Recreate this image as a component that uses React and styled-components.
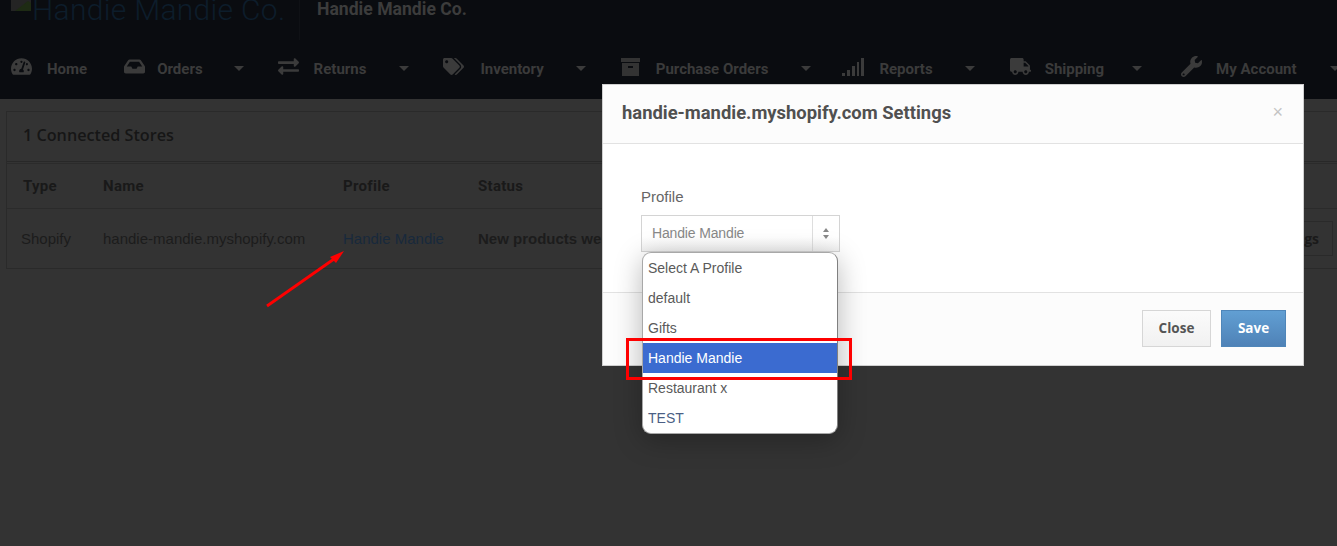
import React from 'react';
import styled, { createGlobalStyle } from 'styled-components';
import {
  FaTachometerAlt, FaInbox, FaExchangeAlt, FaTags, FaTruck, FaWrench,
} from 'react-icons/fa';

const GlobalStyle = createGlobalStyle`
  html, body {
    margin: 0;
    height: 100%;
    background: #333;
    overflow: hidden;
  }
  * { box-sizing: border-box; }
`;

const Page = styled.div`
  position: relative;
  width: 1337px;
  height: 546px;
  overflow: hidden;
  font-family: "Liberation Sans", Arial, sans-serif;
  font-size: 15px;
  color: #1c1c1c;
`;

const TopBar = styled.header`
  height: 99px;
  background: #0a0c10;
`;

const Brand = styled.div`
  height: 40px;
  display: flex;
  align-items: flex-start;
  padding-left: 11px;
  overflow: hidden;
`;

const LogoAlt = styled.div`
  width: 289px;
  height: 40px;
  display: flex;
  border-right: 1px solid #0f1115;
  font-family: Roboto, sans-serif;
  font-weight: 300;
  font-size: 30px;
  line-height: 20px;
  letter-spacing: 0.3px;
  color: #0d1d2b;
  svg { flex: none; margin-right: 1px; }
`;

const StoreName = styled.div`
  margin-left: 17px;
  font-family: Roboto, sans-serif;
  font-weight: 700;
  font-size: 17.6px;
  line-height: 18px;
  color: #3c3c3c;
`;

const Nav = styled.nav`
  display: flex;
  align-items: center;
  height: 59px;
  padding: 0 0 2px 11px;
  font-family: Roboto, sans-serif;
  font-weight: 700;
  font-size: 15px;
  color: #3b3b3b;
`;

const NavItem = styled.a`
  flex: none;
  display: flex;
  align-items: center;
  white-space: nowrap;
  margin-right: ${(p) => p.$after}px;
`;

const NavIcon = styled.span`
  display: flex;
  width: ${(p) => p.$width}px;
  font-size: 21px;
  position: relative;
  top: -2px;
`;

const Caret = styled.span`
  flex: none;
  margin-left: ${(p) => p.$gap}px;
  width: 0;
  height: 0;
  border-left: 5px solid transparent;
  border-right: 5px solid transparent;
  border-top: 5px solid #3b3b3b;
`;

const Content = styled.main`
  padding: 12px 0 0 6px;
`;

const StoresPanel = styled.section`
  border: 1px solid #2a2a2a;
  width: 1340px;
  height: 158px;
`;

const PanelHeading = styled.h2`
  margin: 0 0 1px;
  height: 50px;
  padding: 0 16px 3px;
  display: flex;
  align-items: center;
  border-bottom: 1px solid #282828;
  font-family: "Open Sans", sans-serif;
  font-weight: 600;
  font-size: 16.2px;
  color: #161616;
`;

const Row = styled.div`
  display: grid;
  grid-template-columns: ${(p) => p.$first}px 240px 135px 1fr auto;
  align-items: center;
  height: ${(p) => p.$height}px;
  padding-left: ${(p) => p.$inset}px;
  border-top: ${(p) => (p.$ruled ? '1px solid #2b2b2b' : 'none')};
  border-bottom: ${(p) => (p.$ruled ? '1px solid #2b2b2b' : 'none')};
`;

const HeadCell = styled.span`
  font-family: Roboto, sans-serif;
  font-weight: 700;
  font-size: 15px;
  letter-spacing: 0.3px;
  color: #191919;
`;

const Cell = styled.span`
  color: ${(p) => p.$color || '#1c1c1c'};
  font-weight: ${(p) => (p.$bold ? 700 : 400)};
`;

const GhostButton = styled.span`
  display: block;
  height: 35px;
  margin-right: 12px;
  padding: 0 13px 0 12px;
  border: 1px solid #2a2a2a;
  font-family: "Open Sans", sans-serif;
  font-weight: 700;
  font-size: 14px;
  line-height: 33px;
  color: #1a1a1a;
`;

const Modal = styled.div`
  position: absolute;
  left: 602px;
  top: 84px;
  width: 702px;
  height: 282px;
  display: flex;
  flex-direction: column;
  background: #fff;
  border: 1px solid #d0d0d0;
  color: #555;
`;

const ModalHeader = styled.div`
  height: 59px;
  flex: none;
  display: flex;
  align-items: center;
  justify-content: space-between;
  padding: 0 20px 3px 19px;
  background: #fcfcfc;
  border-bottom: 1px solid #e2e2e2;
`;

const ModalTitle = styled.h3`
  margin: 0;
  font-family: Roboto, sans-serif;
  font-weight: 700;
  font-size: 18.4px;
  color: #505050;
`;

const CloseX = styled.span`
  font-size: 18px;
  color: #c4c4c4;
`;

const ModalBody = styled.div`
  flex: 1;
  padding: 44px 0 0 38px;
`;

const FieldLabel = styled.label`
  display: block;
  margin-bottom: 9px;
  font-size: 15px;
  line-height: 18px;
  color: #666;
`;

const SelectBox = styled.div`
  display: flex;
  width: 199px;
  height: 37px;
  border: 1px solid #d4d4d4;
  background: linear-gradient(#fff 60%, #f1f1f1);
`;

const SelectValue = styled.span`
  flex: 1;
  padding-left: 10px;
  line-height: 35px;
  font-size: 14px;
  letter-spacing: -0.15px;
  color: #888;
`;

const SelectArrows = styled.span`
  width: 27px;
  display: flex;
  flex-direction: column;
  align-items: center;
  justify-content: center;
  gap: 3px;
  border-left: 1px solid #dedede;
`;

const ArrowTip = styled.span`
  width: 0;
  height: 0;
  border-left: 3.5px solid transparent;
  border-right: 3.5px solid transparent;
  border-${(p) => (p.$up ? 'bottom' : 'top')}: 4px solid #888;
`;

const ModalFooter = styled.div`
  height: 73px;
  flex: none;
  display: flex;
  justify-content: flex-end;
  align-items: center;
  gap: 10px;
  padding: 0 17px 2px 0;
  background: #fcfcfc;
  border-top: 1px solid #e2e2e2;
`;

const FooterButton = styled.button`
  width: ${(p) => p.$width}px;
  height: 37px;
  padding: 0;
  font-family: "Open Sans", sans-serif;
  font-weight: 700;
  font-size: 13.5px;
  color: ${(p) => (p.$primary ? '#fff' : '#555')};
  border: 1px solid ${(p) => (p.$primary ? '#4f86b9' : '#d6d6d6')};
  background: ${(p) => (p.$primary
    ? 'linear-gradient(#619fd3, #4f82b7)'
    : 'linear-gradient(#fbfbfb, #f1f1f1)')};
`;

const OptionList = styled.ul`
  position: absolute;
  left: 642px;
  top: 252px;
  width: 196px;
  height: 182px;
  margin: 0;
  padding: 0;
  list-style: none;
  background: #fff;
  border: 1px solid #a8a8a8;
  border-right-color: #808080;
  border-radius: 9px;
  overflow: hidden;
  box-shadow: 0 6px 28px rgba(0, 0, 0, 0.28);
  font-size: 14px;
`;

const Option = styled.li`
  height: 30px;
  line-height: 30px;
  padding-left: 5px;
  color: ${(p) => {
    if (p.$selected) return '#fff';
    return p.$color || '#5a5a5a';
  }};
  background: ${(p) => (p.$selected ? '#3b6bd0' : 'transparent')};
`;

const Highlight = styled.div`
  position: absolute;
  left: 626px;
  top: 338px;
  width: 226px;
  height: 42px;
  border: 3px solid #fe0000;
`;

const Arrow = styled.svg`
  position: absolute;
  left: 260px;
  top: 245px;
`;

function ArchiveIcon() {
  return (
    <svg width="19" height="18" viewBox="0 0 19 18" fill="#333">
      <path d="M0 0h19v4H0z" />
      <path d="M1 5h17v13H1zM7 8v2h5V8z" fillRule="evenodd" />
    </svg>
  );
}

function SignalIcon() {
  return (
    <svg width="22" height="18" viewBox="0 0 22 18" fill="#3b3b3b">
      <path d="M0 15h3v3H0zM5 12h3v6H5zM10 8h3v10h-3zM15 4h2v14h-2zM19 0h3v18h-3z" />
    </svg>
  );
}

const navItems = [
  { label: 'Home', Icon: FaTachometerAlt, iconWidth: 36, after: 37 },
  { label: 'Orders', Icon: FaInbox, iconWidth: 33, caretGap: 31, after: 34 },
  { label: 'Returns', Icon: FaExchangeAlt, iconWidth: 36, caretGap: 33, after: 34 },
  { label: 'Inventory', Icon: FaTags, iconWidth: 37, caretGap: 32, after: 35 },
  { label: 'Purchase Orders', Icon: ArchiveIcon, iconWidth: 35, caretGap: 33, after: 31 },
  { label: 'Reports', Icon: SignalIcon, iconWidth: 37, caretGap: 32, after: 35 },
  { label: 'Shipping', Icon: FaTruck, iconWidth: 35, caretGap: 28, after: 39 },
  { label: 'My Account', Icon: FaWrench, iconWidth: 35, caretGap: 33, after: 0 },
];

const profiles = ['Select A Profile', 'default', 'Gifts', 'Handie Mandie', 'Restaurant x', 'TEST'];

export default function App() {
  return (
    <Page>
      <GlobalStyle />
      <TopBar>
        <Brand>
          <LogoAlt>
            <svg width="20" height="11" viewBox="0 0 20 11">
              <path d="M0 0h20v11H0z" fill="#242424" />
              <path d="M4 11L17 1l3 2v8z" fill="#1e2b14" />
            </svg>
            Handie Mandie Co.
          </LogoAlt>
          <StoreName>Handie Mandie Co.</StoreName>
        </Brand>
        <Nav>
          {navItems.map(({
            label, Icon, iconWidth, caretGap, after,
          }) => (
            <NavItem key={label} $after={after}>
              <NavIcon $width={iconWidth}><Icon /></NavIcon>
              {label}
              {caretGap && <Caret $gap={caretGap} />}
            </NavItem>
          ))}
        </Nav>
      </TopBar>
      <Content>
        <StoresPanel>
          <PanelHeading>1 Connected Stores</PanelHeading>
          <Row $height={46} $inset={16} $first={80} $ruled>
            <HeadCell>Type</HeadCell>
            <HeadCell>Name</HeadCell>
            <HeadCell>Profile</HeadCell>
            <HeadCell>Status</HeadCell>
          </Row>
          <Row $height={59} $inset={14} $first={82}>
            <Cell>Shopify</Cell>
            <Cell>handie-mandie.myshopify.com</Cell>
            <Cell $color="#18293c">Handie Mandie</Cell>
            <Cell $bold>New products were imported</Cell>
            <GhostButton>Settings</GhostButton>
          </Row>
        </StoresPanel>
      </Content>

      <Arrow width="95" height="70" viewBox="0 0 95 70">
        <line x1="7" y1="61" x2="74" y2="14" stroke="#fe0000" strokeWidth="2.8" />
        <path d="M84 6L70 12L76 18z" fill="#fe0000" />
      </Arrow>

      <Modal>
        <ModalHeader>
          <ModalTitle>handie-mandie.myshopify.com Settings</ModalTitle>
          <CloseX>×</CloseX>
        </ModalHeader>
        <ModalBody>
          <FieldLabel>Profile</FieldLabel>
          <SelectBox>
            <SelectValue>Handie Mandie</SelectValue>
            <SelectArrows>
              <ArrowTip $up />
              <ArrowTip />
            </SelectArrows>
          </SelectBox>
        </ModalBody>
        <ModalFooter>
          <FooterButton $width={69}>Close</FooterButton>
          <FooterButton $width={65} $primary>Save</FooterButton>
        </ModalFooter>
      </Modal>

      <OptionList>
        {profiles.map((name) => (
          <Option
            key={name}
            $selected={name === 'Handie Mandie'}
            $color={name === 'TEST' ? '#4b5f85' : undefined}
          >
            {name}
          </Option>
        ))}
      </OptionList>
      <Highlight />
    </Page>
  );
}
